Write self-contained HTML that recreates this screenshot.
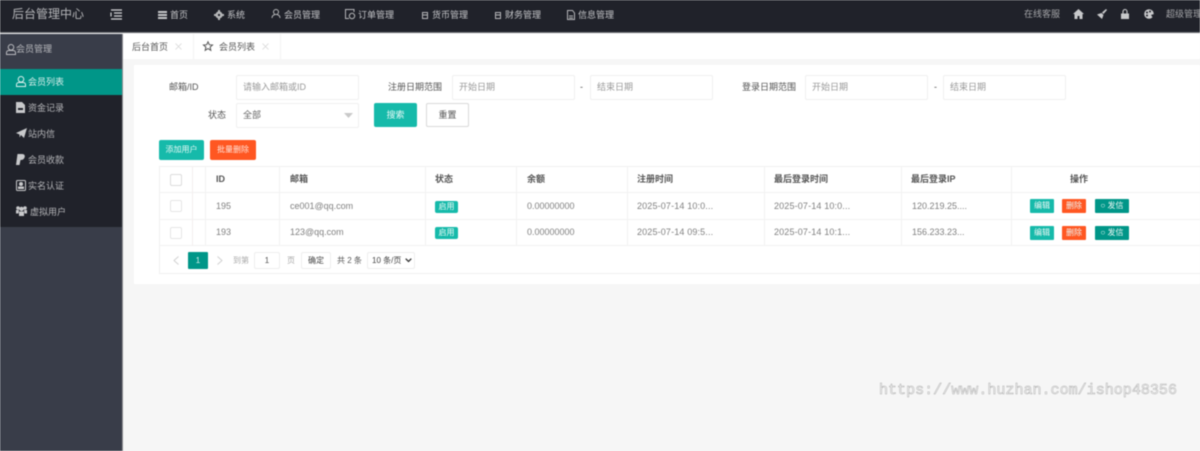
<!DOCTYPE html>
<html lang="zh"><head><meta charset="utf-8"><title>后台管理中心</title>
<style>
*{box-sizing:border-box}
html,body{margin:0;padding:0;width:1200px;height:451px;overflow:hidden;background:#f6f6f6}
body{font-family:"Liberation Sans","Noto Sans CJK SC",sans-serif;font-size:9px;color:#666;position:relative}
#w{position:absolute;left:0;top:0;width:1200px;height:451px;filter:blur(.45px);overflow:hidden}
.a{position:absolute;white-space:nowrap}
.b{position:absolute}
svg{position:absolute;overflow:visible}
.n{color:#c4c5c8;font-size:9px;top:9px;line-height:13px}
.s{color:#b4b5b8;font-size:9px;left:28px;line-height:13px}
.l{font-size:9px;color:#555;line-height:13px}
.i{position:absolute;height:25px;background:#fff;border:1px solid #f0f0f0;border-radius:2px;color:#999;font-size:9px;line-height:23px;padding-left:6px;white-space:nowrap}
.h{font-size:9px;font-weight:bold;color:#555;top:173px;line-height:13px}
.c{font-size:9px;color:#808080;line-height:13px}
.d{letter-spacing:.15px}
.v{position:absolute;width:1px;background:#f2f2f2}
.g{position:absolute;height:1px;background:#f2f2f2}
.tag{position:absolute;left:435px;width:23px;height:12px;background:#16baaa;border-radius:2px;color:#eafaf8;font-size:8px;line-height:12px;text-align:center}
.btn{position:absolute;height:14px;border-radius:1px;color:#eef8f6;font-size:8px;line-height:14px;text-align:center;white-space:nowrap}
.cb{position:absolute;left:170px;width:12px;height:12px;border:1px solid #e6e6e6;border-radius:2px;background:#fff}
</style></head><body><div id="w">
<div class="b" style="left:0;top:0;width:1200px;height:33px;background:#20222a;border-bottom:1px solid #6f7175"></div>
<div class="a" style="left:12px;top:6px;font-size:12px;line-height:17px;color:#b4b5b8">后台管理中心</div>
<svg style="left:111px;top:9px" width="11" height="11" fill="none" stroke="#d4d5d7" stroke-width="1.2"><path d="M0 1H11M3 4H11M3 7H11M0 10H11M0 3.500V7.500"/></svg>

<svg style="left:158px;top:11px" width="9" height="8" fill="#c5c6c8"><path d="M0 0H9V2H0ZM0 3H9V5H0ZM0 6H9V8H0Z"/></svg>
<div class="a n" style="left:170px">首页</div>
<svg style="left:214px;top:10px" width="10" height="10" fill="#b5b6b8"><circle cx="5" cy="5" r="3.600"/><circle cx="5" cy="5" r="1.200" fill="#20222a"/><path d="M4 0H6V10H4ZM0 4V6H10V4Z"/></svg>
<div class="a n" style="left:227px">系统</div>
<svg style="left:271px;top:9px" width="10" height="10" fill="none" stroke="#b5b6b8"><circle cx="5" cy="3" r="2.500"/><path d="M1 9C1 6 3 6 4 5.500M9 9C9 6 7 6 6 5.500"/></svg>
<div class="a n" style="left:284px">会员管理</div>
<svg style="left:345px;top:9px" width="11" height="11" fill="none" stroke="#b5b6b8"><path d="M9 3V.5H.5V9.500H4"/><circle cx="7" cy="7" r="2.700"/></svg>
<div class="a n" style="left:358px">订单管理</div>
<svg style="left:422px;top:12px" width="6" height="7" fill="none" stroke="#b5b6b8"><rect x=".5" y=".5" width="5" height="6"/><path d="M1 3H5"/></svg>
<div class="a n" style="left:432px">货币管理</div>
<svg style="left:495px;top:12px" width="6" height="7" fill="none" stroke="#b5b6b8"><rect x=".5" y=".5" width="5" height="6"/><path d="M1 3H5"/></svg>
<div class="a n" style="left:505px">财务管理</div>
<svg style="left:567px;top:10px" width="8" height="10" fill="none" stroke="#b5b6b8"><path d="M.5.5H5.500L7.500 3V9.500H.5ZM2 6H6M2 8H6"/></svg>
<div class="a n" style="left:578px">信息管理</div>

<div class="a" style="left:1024px;top:8px;font-size:9px;line-height:13px;color:#a4a5a8">在线客服</div>
<svg style="left:1073px;top:9px" width="11" height="10" fill="#c8c9cb"><path d="M5.500 0L11 5H9.500V10H6.500V7H4.500V10H1.500V5H0Z"/></svg>
<svg style="left:1097px;top:9px" width="10" height="10" fill="#c8c9cb"><path d="M9 0L10 1L6.500 5L5 3.500ZM4.500 4L6.500 6L5 10L0 5.500Z"/></svg>
<svg style="left:1121px;top:9px" width="8" height="10" fill="#c8c9cb"><path d="M0 4.500H8V10H0Z"/><path d="M2 4.500V2.500A2 2 0 0 1 6 2.500V4.500" fill="none" stroke="#c8c9cb" stroke-width="1.100"/></svg>
<svg style="left:1144px;top:9px" width="10" height="10"><circle cx="5" cy="5" r="4.800" fill="#c8c9cb"/><circle cx="3" cy="3.500" r="1" fill="#20222a"/><circle cx="6" cy="2.500" r="1" fill="#20222a"/><circle cx="3" cy="6.500" r="1" fill="#20222a"/><path d="M7 6L10 5L9 9Z" fill="#20222a"/></svg>
<div class="a" style="left:1166px;top:8px;font-size:9px;line-height:13px;color:#a4a5a8">超级管理员</div>

<div class="b" style="left:0;top:34px;width:122px;height:417px;background:#393d49"></div>
<div class="b" style="left:122px;top:34px;width:1px;height:417px;background:#8a8b90"></div>
<svg style="left:6px;top:44px" width="10" height="11" fill="none" stroke="#b8b9bd"><circle cx="5" cy="3.300" r="2.800"/><path d="M.5 10.500V8.500C.5 7 2 6.500 3 6.500H7C8 6.500 9.500 7 9.500 8.500V10.500Z"/></svg>
<div class="a" style="left:16px;top:43px;font-size:9px;line-height:13px;color:#b6b7bb">会员管理</div>
<div class="b" style="left:0;top:69px;width:122px;height:158px;background:#20222a"></div>
<div class="b" style="left:0;top:69px;width:122px;height:26px;background:#009688"></div>
<svg style="left:16px;top:76px" width="10" height="11" fill="none" stroke="#d9efed"><circle cx="5" cy="3.300" r="2.800"/><path d="M.5 10.500V8.500C.5 7 2 6.500 3 6.500H7C8 6.500 9.500 7 9.500 8.500V10.500Z"/></svg>
<div class="a s" style="top:76px;color:#d6eeeb">会员列表</div>
<svg style="left:16px;top:102px" width="9" height="11" fill="#c8c9cb"><path d="M0 0H6L9 3V11H0Z"/><path d="M2 6H7V8H2Z" fill="#20222a"/></svg>
<div class="a s" style="top:102px">资金记录</div>
<svg style="left:16px;top:128px" width="11" height="10" fill="#c8c9cb"><path d="M11 0L8 10L5 7L3.500 9.500V6.500L0 5Z"/></svg>
<div class="a s" style="top:128px">站内信</div>
<svg style="left:16px;top:154px" width="9" height="11" fill="#c8c9cb"><path d="M1.500 0H6C9 0 9.500 2.500 8 4.500C7 6 5.500 6 4.500 6L3.500 11H0Z"/></svg>
<div class="a s" style="top:154px">会员收款</div>
<svg style="left:16px;top:180px" width="10" height="11" fill="none" stroke="#c8c9cb"><rect x=".5" y=".5" width="9" height="10" rx="1"/><circle cx="5" cy="4" r="1.500" fill="#c8c9cb"/><path d="M2.500 8.500H7.500V7H2.500Z" fill="#c8c9cb"/></svg>
<div class="a s" style="top:180px">实名认证</div>
<svg style="left:16px;top:206px" width="11" height="10" fill="#c8c9cb"><circle cx="2" cy="2" r="1.800"/><circle cx="9" cy="2" r="1.800"/><circle cx="5.500" cy="3" r="2.200"/><path d="M0 4H3L2.500 7.500H0ZM8 4H11V7.500H8.500ZM3 5.500H8V10H3Z"/></svg>
<div class="a s" style="top:206px;left:30px">虚拟用户</div>

<div class="b" style="left:123px;top:34px;width:1077px;height:25px;background:#fff"></div>
<div class="v" style="left:193px;top:34px;height:25px;background:#f3f3f3"></div>
<div class="v" style="left:280px;top:34px;height:25px;background:#f3f3f3"></div>
<div class="a" style="left:132px;top:41px;font-size:9px;line-height:13px;color:#555">后台首页</div>
<svg style="left:175px;top:43px" width="7" height="7" stroke="#d8d8d8" stroke-width=".8"><path d="M.5.5L6.500 6.500M6.500.5L.5 6.500"/></svg>
<svg style="left:203px;top:41px" width="10" height="10" fill="none" stroke="#555"><path d="M5 .8L6.300 3.700L9.500 4L7.100 6.100L7.800 9.300L5 7.600L2.200 9.300L2.900 6.100L.5 4L3.700 3.700Z"/></svg>
<div class="a" style="left:219px;top:41px;font-size:9px;line-height:13px;color:#555">会员列表</div>
<svg style="left:262px;top:43px" width="7" height="7" stroke="#d8d8d8" stroke-width=".8"><path d="M.5.5L6.500 6.500M6.500.5L.5 6.500"/></svg>

<div class="b" style="left:134px;top:65px;width:1066px;height:219px;background:#fff"></div>

<div class="a l" style="left:169px;top:81px">邮箱/ID</div>
<div class="i" style="left:236px;top:75px;width:123px">请输入邮箱或ID</div>
<div class="a l" style="left:388px;top:81px">注册日期范围</div>
<div class="i" style="left:452px;top:75px;width:123px">开始日期</div>
<div class="a l" style="left:580px;top:81px">-</div>
<div class="i" style="left:590px;top:75px;width:123px">结束日期</div>
<div class="a l" style="left:742px;top:81px">登录日期范围</div>
<div class="i" style="left:805px;top:75px;width:123px">开始日期</div>
<div class="a l" style="left:934px;top:81px">-</div>
<div class="i" style="left:943px;top:75px;width:123px">结束日期</div>
<div class="a l" style="left:208px;top:109px">状态</div>
<div class="i" style="left:236px;top:103px;width:123px;color:#666">全部</div>
<svg style="left:344px;top:113px" width="9" height="5" fill="#c9c9c9"><path d="M0 0H9L4.500 5Z"/></svg>
<div class="b" style="left:374px;top:103px;width:43px;height:24px;background:#16baaa;border-radius:2px;color:#eafaf8;font-size:9px;line-height:24px;text-align:center">搜索</div>
<div class="b" style="left:426px;top:103px;width:43px;height:24px;background:#fff;border:1px solid #d9d9d9;border-radius:2px;color:#555;font-size:9px;line-height:22px;text-align:center">重置</div>

<div class="b" style="left:159px;top:140px;width:45px;height:20px;background:#16baaa;border-radius:2px;color:#e4f8f5;font-size:8px;line-height:20px;text-align:center">添加用户</div>
<div class="b" style="left:210px;top:140px;width:46px;height:20px;background:#ff5722;border-radius:2px;color:#ffe4da;font-size:8px;line-height:20px;text-align:center">批量删除</div>

<div class="b" style="left:159px;top:166px;width:1041px;height:108px;border:1px solid #f0f0f0;border-right:0"></div>
<div class="g" style="left:159px;top:192px;width:1041px"></div>
<div class="g" style="left:159px;top:219px;width:1041px"></div>
<div class="g" style="left:159px;top:245px;width:1041px"></div>
<div class="v" style="left:192px;top:166px;height:80px;background:#f3eeee"></div>
<div class="v" style="left:205px;top:166px;height:80px"></div>
<div class="v" style="left:279px;top:166px;height:80px"></div>
<div class="v" style="left:425px;top:166px;height:80px"></div>
<div class="v" style="left:516px;top:166px;height:80px"></div>
<div class="v" style="left:627px;top:166px;height:80px"></div>
<div class="v" style="left:764px;top:166px;height:80px"></div>
<div class="v" style="left:901px;top:166px;height:80px"></div>
<div class="v" style="left:1011px;top:166px;height:80px"></div>

<div class="cb" style="top:174px;border-color:#dcdcdc"></div>
<div class="cb" style="top:200px"></div>
<div class="cb" style="top:227px"></div>

<div class="a h" style="left:216px">ID</div>
<div class="a h" style="left:290px">邮箱</div>
<div class="a h" style="left:435px">状态</div>
<div class="a h" style="left:527px">余额</div>
<div class="a h" style="left:637px">注册时间</div>
<div class="a h" style="left:774px">最后登录时间</div>
<div class="a h" style="left:911px">最后登录IP</div>
<div class="a h" style="left:1070px">操作</div>

<div class="a c" style="left:216px;top:200px">195</div>
<div class="a c" style="left:290px;top:200px">ce001@qq.com</div>
<div class="tag" style="top:201px">启用</div>
<div class="a c" style="left:527px;top:200px">0.00000000</div>
<div class="a c d" style="left:637px;top:200px">2025-07-14 10:0...</div>
<div class="a c d" style="left:774px;top:200px">2025-07-14 10:0...</div>
<div class="a c" style="left:912px;top:200px">120.219.25....</div>
<div class="btn" style="left:1030px;top:199px;width:24px;background:#16baaa">编辑</div>
<div class="btn" style="left:1062px;top:199px;width:24px;background:#ff5722">删除</div>
<div class="btn" style="left:1095px;top:199px;width:34px;background:#009688">&#9675; 发信</div>

<div class="a c" style="left:216px;top:226px">193</div>
<div class="a c" style="left:290px;top:226px">123@qq.com</div>
<div class="tag" style="top:227px">启用</div>
<div class="a c" style="left:527px;top:226px">0.00000000</div>
<div class="a c d" style="left:637px;top:226px">2025-07-14 09:5...</div>
<div class="a c d" style="left:774px;top:226px">2025-07-14 10:1...</div>
<div class="a c" style="left:912px;top:226px">156.233.23...</div>
<div class="btn" style="left:1030px;top:226px;width:24px;background:#16baaa">编辑</div>
<div class="btn" style="left:1062px;top:226px;width:24px;background:#ff5722">删除</div>
<div class="btn" style="left:1095px;top:226px;width:34px;background:#009688">&#9675; 发信</div>

<svg style="left:173px;top:256px" width="6" height="9" fill="none" stroke="#d2d2d2"><path d="M5.500.5L1 4.500L5.500 8.500"/></svg>
<div class="b" style="left:188px;top:252px;width:20px;height:17px;background:#009688;border-radius:1px;color:#d6eeeb;font-size:8px;line-height:17px;text-align:center">1</div>
<svg style="left:217px;top:256px" width="6" height="9" fill="none" stroke="#d2d2d2"><path d="M.5.5L5 4.500L.5 8.500"/></svg>
<div class="a" style="left:233px;top:254px;font-size:8px;line-height:13px;color:#aaa">到第</div>
<div class="b" style="left:254px;top:252px;width:26px;height:17px;border:1px solid #eee;border-radius:2px;color:#555;font-size:8px;line-height:15px;text-align:center">1</div>
<div class="a" style="left:287px;top:254px;font-size:8px;line-height:13px;color:#aaa">页</div>
<div class="b" style="left:301px;top:252px;width:30px;height:17px;border:1px solid #eee;border-radius:2px;color:#444;font-size:8px;line-height:15px;text-align:center">确定</div>
<div class="a" style="left:337px;top:254px;font-size:8px;line-height:13px;color:#555">共 2 条</div>
<div class="b" style="left:367px;top:252px;width:48px;height:17px;border:1px solid #eee;border-radius:2px;color:#444;font-size:8px;line-height:15px;padding-left:4px;white-space:nowrap">10 条/页</div>
<svg style="left:405px;top:258px" width="7" height="5" fill="none" stroke="#333" stroke-width="1.300"><path d="M.7.7L3.500 3.500L6.300.7"/></svg>

<div class="a" style="left:879px;top:380px;font-family:'Liberation Mono','DejaVu Sans Mono',monospace;font-size:15.050px;line-height:20px;color:#f6f6f6;-webkit-text-stroke:.5px #b0b0b0">https://www.huzhan.com/ishop48356</div>
</div></body></html>
